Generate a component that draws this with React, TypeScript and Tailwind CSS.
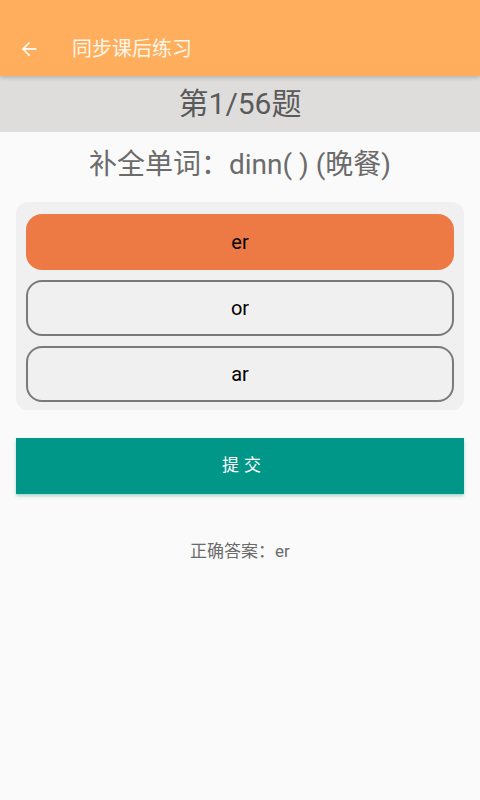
import { useState } from 'react'

const options = ['er', 'or', 'ar']

export default function App() {
  const [selected, setSelected] = useState(0)

  return (
    <div
      className="min-h-[800px] w-full bg-[#fafafa]"
      style={{ fontFamily: 'Roboto, "Noto Sans CJK SC", sans-serif' }}
    >
      {/* toolbar */}
      <div className="relative z-10 flex h-[76px] items-end bg-[#ffae5d] pb-[16px] shadow-[0_2px_4px_rgba(0,0,0,0.18)]">
        <button className="ml-[18px] flex h-[22px] w-[22px] items-center justify-center text-[#fff6e8]">
          <svg viewBox="0 0 24 24" className="h-[22px] w-[22px]" fill="currentColor">
            <path d="M20 11H7.83l5.59-5.59L12 4l-8 8 8 8 1.41-1.41L7.83 13H20v-2z" />
          </svg>
        </button>
        <span className="ml-[32px] text-[20px] leading-[22px] text-[#fff6e8]">同步课后练习</span>
      </div>

      {/* progress */}
      <div className="flex h-[56px] items-center justify-center bg-[#dfdddc]">
        <span className="text-[30px] leading-[36px] text-[#5a5a5a]">第1/56题</span>
      </div>

      <div className="px-[16px]">
        <p className="mt-[18px] text-center text-[28px] leading-[30px] text-[#6b6b6b]">补全单词：dinn( ) (晚餐)</p>

        {/* options */}
        <div className="mt-[22px] flex flex-col gap-[10px] rounded-[12px] bg-[#f0f0f0] px-[10px] pt-[12px] pb-[8px]">
          {options.map((opt, i) => (
            <button
              key={opt}
              onClick={() => setSelected(i)}
              className={
                i === selected
                  ? 'h-[56px] rounded-[16px] border-2 border-[#ed7a45] bg-[#ed7a45] text-[20px] text-black'
                  : 'h-[56px] rounded-[16px] border-2 border-[#7a7a7a] bg-[#f0f0f0] text-[20px] text-black'
              }
            >
              {opt}
            </button>
          ))}
        </div>

        {/* submit */}
        <button className="mt-[28px] h-[56px] w-full bg-[#009688] pl-[8px] text-[17px] tracking-[5px] text-white shadow-[0_2px_3px_rgba(0,150,136,0.35)]">
          提交
        </button>

        <p className="mt-[47px] text-center text-[17px] leading-[20px] text-[#6b6b6b]">正确答案：er</p>
      </div>
    </div>
  )
}
